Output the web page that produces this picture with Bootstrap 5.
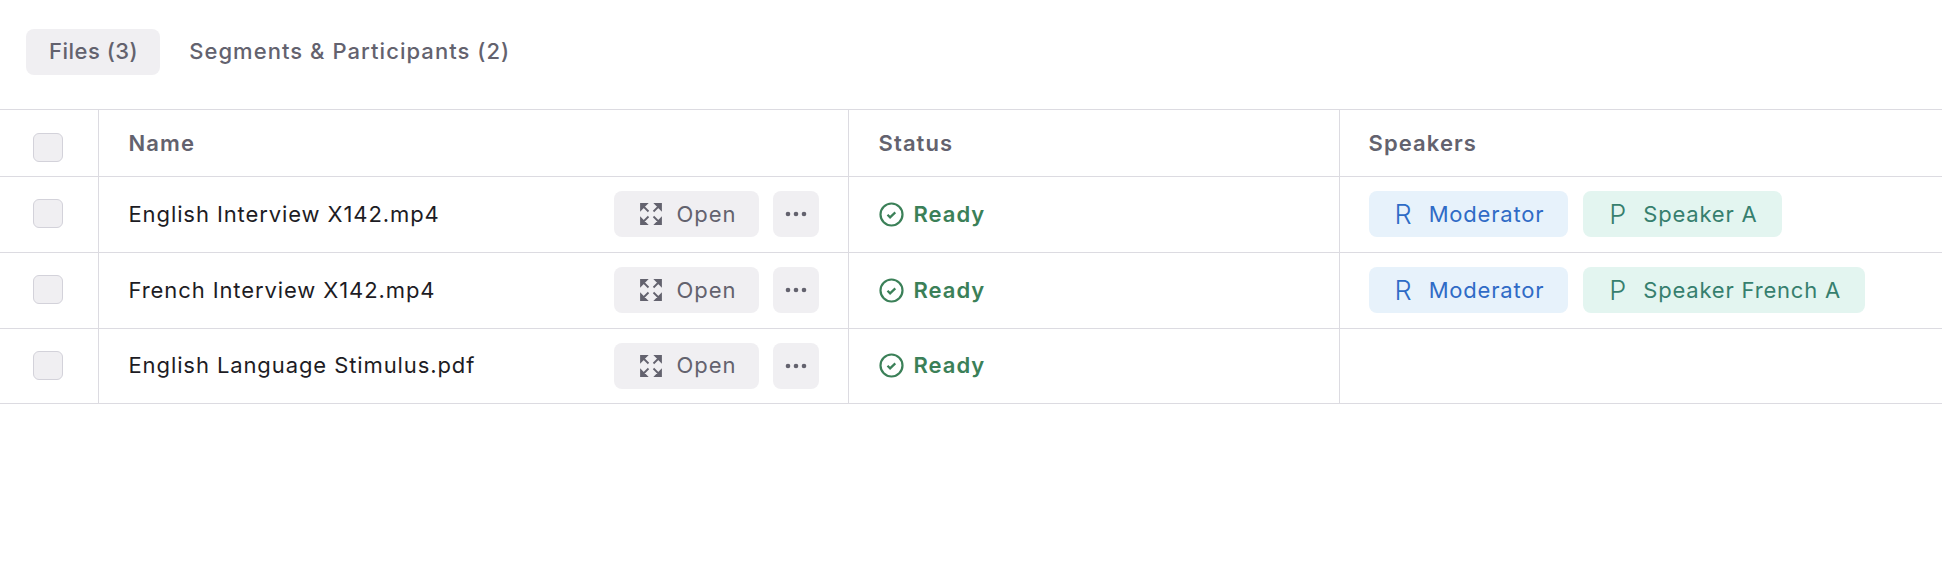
<!DOCTYPE html>
<html lang="en">

<head>
  <meta charset="UTF-8">
  <meta name="viewport" content="width=device-width, initial-scale=1.0">
  <title>Files</title>
  <link href="https://cdn.jsdelivr.net/npm/bootstrap@5.3.0/dist/css/bootstrap.min.css" rel="stylesheet">
  <style>
    body { font-family: Inter, "Liberation Sans", sans-serif; font-size: 22px; color: #1d1c24; background: #fff; letter-spacing: .9px; }
    button { letter-spacing: inherit; }
    .tabs-bar { padding: 29px 0 34px 26px; gap: 6px; }
    .tab-link { height: 46px; padding: 0 23px 2px; border: 0; border-radius: 8px; background: transparent; color: #63626e; font-weight: 500; letter-spacing: 1.05px; display: flex; align-items: center; }
    .tab-link.is-active { background: #f0eff2; padding: 0 22px 2px 23px; letter-spacing: .5px; }
    .files-table { table-layout: fixed; width: 100%; margin: 0; border-top: 1px solid #dcdbe1; }
    .files-table th, .files-table td { border-bottom: 1px solid #dcdbe1; border-right: 1px solid #dcdbe1; padding: 0 29px 1px 30px; vertical-align: middle; height: 76px; }
    .files-table th { height: 67px; padding-bottom: 0; color: #63626e; font-weight: 600; letter-spacing: 1.1px; }
    .files-table th:last-child, .files-table td:last-child { border-right: 0; padding-left: 29px; }
    .files-table tr:last-child td { height: 75px; }
    .files-table .check-col { padding: 0; width: 98px; }
    .name-col { width: 750px; }
    .status-col { width: 491px; }
    .fake-check { display: block; width: 30px; height: 29px; margin: 0 0 2px 33px; background: #f0eff2; border: 1px solid #d3d2da; border-radius: 6px; }
    th .fake-check { margin: 8px 0 0 33px; }
    .soft-btn { height: 46px; border: 0; border-radius: 8px; background: #f0eff2; color: #63626e; display: flex; align-items: center; justify-content: center; }
    .open-btn { width: 145px; gap: 15px; margin-right: 14px; padding: 0 0 0 26px; justify-content: flex-start; letter-spacing: 1px; }
    .more-btn { width: 46px; }
    .status-ready { color: #3b8058; font-weight: 600; gap: 10px; letter-spacing: 1px; }
    .chip-row { display: flex; column-gap: 15px; letter-spacing: .8px; }
    .speaker-chip { height: 46px; border-radius: 8px; padding: 0 24px 0 26px; display: flex; align-items: center; gap: 17px; }
    .speaker-chip .chip-letter { font-size: 27px; font-weight: 300; line-height: 1; letter-spacing: 0; }
    .chip-blue { background: #e7f2fb; color: #2f6bc6; }
    .chip-green { background: #e3f5f0; color: #367f6e; }
  </style>
</head>

<body>
  <div class="tabs-bar d-flex">
    <button type="button" class="tab-link is-active">Files (3)</button>
    <button type="button" class="tab-link">Segments &amp; Participants (2)</button>
  </div>

  <table class="files-table">
    <thead>
      <tr>
        <th class="check-col"><span class="fake-check"></span></th>
        <th class="name-col">Name</th>
        <th class="status-col">Status</th>
        <th>Speakers</th>
      </tr>
    </thead>
    <tbody>
      <tr>
        <td class="check-col"><span class="fake-check"></span></td>
        <td>
          <div class="d-flex align-items-center">
            <span class="flex-grow-1">English Interview X142.mp4</span>
            <button type="button" class="soft-btn open-btn">
              <svg width="22" height="22" viewBox="0 0 22 22" fill="#63626e" stroke="#63626e" stroke-width="1.8"><path d="M1 6.5V1h5.5zM2 2l6.5 6.5M21 6.5V1h-5.5zM20 2l-6.5 6.5M1 15.5V21h5.5zM2 20l6.5-6.5M21 15.5V21h-5.5zM20 20l-6.5-6.5"/></svg>
              Open
            </button>
            <button type="button" class="soft-btn more-btn" aria-label="More">
              <svg width="22" height="6" viewBox="0 0 22 6" fill="#63626e"><circle cx="3" cy="3" r="2.3"/><circle cx="11" cy="3" r="2.3"/><circle cx="19" cy="3" r="2.3"/></svg>
            </button>
          </div>
        </td>
        <td>
          <div class="status-ready d-flex align-items-center">
            <svg width="25" height="25" viewBox="0 0 25 25" fill="none" stroke="#3b8058" stroke-width="2.2"><circle cx="12.5" cy="12.5" r="11"/><path d="M8.5 12.8l2.6 2.6 5.2-5"/></svg>
            Ready
          </div>
        </td>
        <td>
          <div class="chip-row">
            <span class="speaker-chip chip-blue"><span class="chip-letter">R</span>Moderator</span>
            <span class="speaker-chip chip-green"><span class="chip-letter">P</span>Speaker A</span>
          </div>
        </td>
      </tr>
      <tr>
        <td class="check-col"><span class="fake-check"></span></td>
        <td>
          <div class="d-flex align-items-center">
            <span class="flex-grow-1">French Interview X142.mp4</span>
            <button type="button" class="soft-btn open-btn">
              <svg width="22" height="22" viewBox="0 0 22 22" fill="#63626e" stroke="#63626e" stroke-width="1.8"><path d="M1 6.5V1h5.5zM2 2l6.5 6.5M21 6.5V1h-5.5zM20 2l-6.5 6.5M1 15.5V21h5.5zM2 20l6.5-6.5M21 15.5V21h-5.5zM20 20l-6.5-6.5"/></svg>
              Open
            </button>
            <button type="button" class="soft-btn more-btn" aria-label="More">
              <svg width="22" height="6" viewBox="0 0 22 6" fill="#63626e"><circle cx="3" cy="3" r="2.3"/><circle cx="11" cy="3" r="2.3"/><circle cx="19" cy="3" r="2.3"/></svg>
            </button>
          </div>
        </td>
        <td>
          <div class="status-ready d-flex align-items-center">
            <svg width="25" height="25" viewBox="0 0 25 25" fill="none" stroke="#3b8058" stroke-width="2.2"><circle cx="12.5" cy="12.5" r="11"/><path d="M8.5 12.8l2.6 2.6 5.2-5"/></svg>
            Ready
          </div>
        </td>
        <td>
          <div class="chip-row">
            <span class="speaker-chip chip-blue"><span class="chip-letter">R</span>Moderator</span>
            <span class="speaker-chip chip-green"><span class="chip-letter">P</span>Speaker French A</span>
          </div>
        </td>
      </tr>
      <tr>
        <td class="check-col"><span class="fake-check"></span></td>
        <td>
          <div class="d-flex align-items-center">
            <span class="flex-grow-1">English Language Stimulus.pdf</span>
            <button type="button" class="soft-btn open-btn">
              <svg width="22" height="22" viewBox="0 0 22 22" fill="#63626e" stroke="#63626e" stroke-width="1.8"><path d="M1 6.5V1h5.5zM2 2l6.5 6.5M21 6.5V1h-5.5zM20 2l-6.5 6.5M1 15.5V21h5.5zM2 20l6.5-6.5M21 15.5V21h-5.5zM20 20l-6.5-6.5"/></svg>
              Open
            </button>
            <button type="button" class="soft-btn more-btn" aria-label="More">
              <svg width="22" height="6" viewBox="0 0 22 6" fill="#63626e"><circle cx="3" cy="3" r="2.3"/><circle cx="11" cy="3" r="2.3"/><circle cx="19" cy="3" r="2.3"/></svg>
            </button>
          </div>
        </td>
        <td>
          <div class="status-ready d-flex align-items-center">
            <svg width="25" height="25" viewBox="0 0 25 25" fill="none" stroke="#3b8058" stroke-width="2.2"><circle cx="12.5" cy="12.5" r="11"/><path d="M8.5 12.8l2.6 2.6 5.2-5"/></svg>
            Ready
          </div>
        </td>
        <td></td>
      </tr>
    </tbody>
  </table>

  <script src="https://cdn.jsdelivr.net/npm/bootstrap@5.3.0/dist/js/bootstrap.bundle.min.js"></script>
</body>

</html>
